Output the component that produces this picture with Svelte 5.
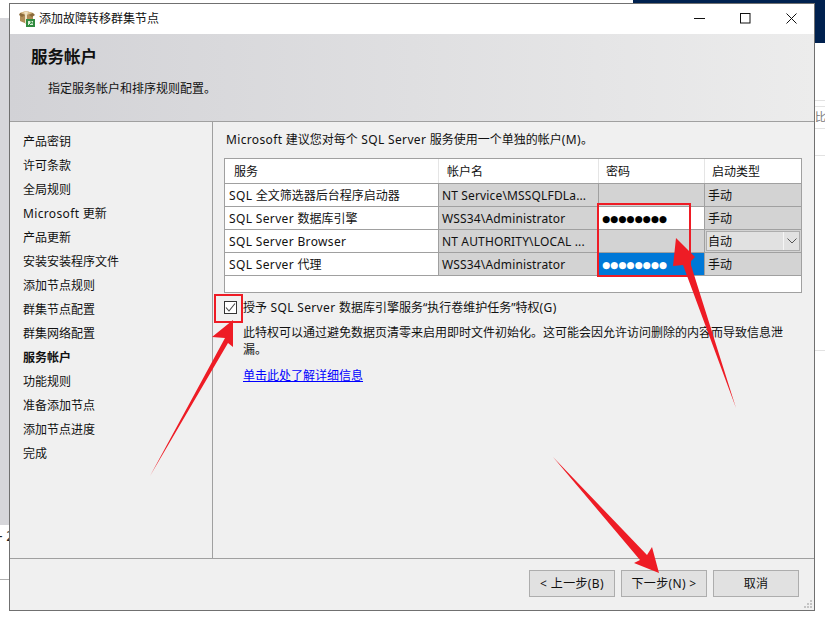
<script>
  const steps = ['产品密钥', '许可条款', '全局规则', 'Microsoft 更新', '产品更新', '安装安装程序文件', '添加节点规则', '群集节点配置', '群集网络配置', '服务帐户', '功能规则', '准备添加节点', '添加节点进度', '完成'];
  const current = '服务帐户';
  const dots = '●●●●●●●●';
  const rows = [
    { service: 'SQL 全文筛选器后台程序启动器', account: 'NT Service\\MSSQLFDLa...', start: '手动' },
    { service: 'SQL Server 数据库引擎', account: 'WSS34\\Administrator', pw: 'edit', start: '手动' },
    { service: 'SQL Server Browser', account: 'NT AUTHORITY\\LOCAL ...', start: '自动', combo: true },
    { service: 'SQL Server 代理', account: 'WSS34\\Administrator', pw: 'selected', start: '手动' }
  ];

  // latin runs get a little tracking, the CJK glyphs stay on their 12px pitch
  const runs = (text) => text.match(/[\x20-\x7e]+|[^\x20-\x7e]+/g);
  const isLatin = (run) => /^[\x20-\x7e]/.test(run);
</script>

{#snippet mixed(text)}
  {#each runs(text) as run}{#if isLatin(run)}<span class="lat">{run}</span>{:else}{run}{/if}{/each}
{/snippet}

<div class="desktop">
  <div class="bg-gray"></div>
  <div class="bg-navy"></div>
  <div class="bg-line" style="top: 100px"></div>
  <div class="bg-line" style="top: 106px"></div>
  <div class="bg-line" style="top: 128px"></div>
  <div class="bg-line" style="top: 155px"></div>
  <div class="bg-line" style="top: 350px"></div>
  <div class="bg-rule"></div>
  <span class="bg-text right-text">比</span>
  <span class="bg-text left-text">- 2</span>

  <div class="window">
    <div class="titlebar">
      <svg class="app-icon" width="16" height="17" viewBox="0 0 16 17">
        <path d="M1 3l6-2 7 2v8l-6 3-7-3z" fill="#b08d57" />
        <path d="M1 3l6 2 7-2-7-2z" fill="#d9bd8a" />
        <path d="M5 1.5l1 4v8h2v-8l1-4z" fill="#efe2c4" />
        <path d="M1 3l-1 2 3 2 3-2zM14 3l2 2-3 2-3-2z" fill="#8a6a3a" />
        <rect x="7" y="9" width="9" height="8" fill="#2f8a3e" />
        <rect x="9" y="11" width="5" height="4" fill="#dcefd8" />
        <path d="M10 15l3-3M11 12h2v2" stroke="#2f8a3e" fill="none" />
      </svg>
      <span class="title">添加故障转移群集节点</span>
      <div class="controls">
        <svg width="11" height="11" viewBox="0 0 11 11"><path d="M0 5.5h11" stroke="#111" /></svg>
        <svg width="11" height="11" viewBox="0 0 11 11"><rect x=".5" y=".5" width="9.5" height="9.5" fill="none" stroke="#111" /></svg>
        <svg width="11" height="11" viewBox="0 0 11 11"><path d="M.5.5l10 10M10.5.5l-10 10" stroke="#111" /></svg>
      </div>
    </div>

    <header class="banner">
      <h1>服务帐户</h1>
      <p>指定服务帐户和排序规则配置。</p>
    </header>

    <div class="body">
      <nav class="steps">
        {#each steps as step}
          <div class="step" class:current={step === current}>{@render mixed(step)}</div>
        {/each}
      </nav>

      <main class="page">
        <p class="intro">{@render mixed('Microsoft 建议您对每个 SQL Server 服务使用一个单独的帐户(M)。')}</p>

        <div class="table">
          <div class="grid">
            <div class="th first">服务</div>
            <div class="th second">帐户名</div>
            <div class="th third">密码</div>
            <div class="th fourth">启动类型</div>
            {#each rows as row}
              <div class="td service">{@render mixed(row.service)}</div>
              <div class="td off account">{row.account}</div>
              {#if row.pw === 'edit'}
                <div class="td pw edit">{dots}</div>
              {:else if row.pw === 'selected'}
                <div class="td pw selected">{dots}</div>
              {:else}
                <div class="td off"></div>
              {/if}
              {#if row.combo}
                <div class="td off combo-cell">
                  <div class="combo">
                    <span class="combo-text">{row.start}</span>
                    <span class="combo-btn">
                      <svg width="10" height="6" viewBox="0 0 10 6"><path d="M.5.5L5 5 9.5.5" fill="none" stroke="#555" /></svg>
                    </span>
                  </div>
                </div>
              {:else}
                <div class="td off">{row.start}</div>
              {/if}
            {/each}
          </div>
          <div class="table-rest"></div>
        </div>

        <div class="grant">
          <span class="checkbox">
            <svg width="11" height="11" viewBox="0 0 11 11"><path d="M1 5.5L4 9l6-7.500" fill="none" stroke="#444" stroke-width="1.100" /></svg>
          </span>
          <span>{@render mixed('授予 SQL Server 数据库引擎服务“执行卷维护任务”特权(G)')}</span>
        </div>
        <p class="note">此特权可以通过避免数据页清零来启用即时文件初始化。这可能会因允许访问删除的内容而导致信息泄漏。</p>
        <a class="more" href="#more">单击此处了解详细信息</a>
      </main>
    </div>

    <footer class="footer">
      <button class="btn"><span class="btn-label">&lt; 上一步(B)</span></button>
      <button class="btn"><span class="btn-label">下一步(N) &gt;</span></button>
      <button class="btn"><span class="btn-label">取消</span></button>
    </footer>
    <svg class="grip" width="9" height="9" viewBox="0 0 9 9" fill="#c4c4c4">
      <rect x="6" y="0" width="2" height="2" /><rect x="3" y="3" width="2" height="2" /><rect x="6" y="3" width="2" height="2" />
      <rect x="0" y="6" width="2" height="2" /><rect x="3" y="6" width="2" height="2" /><rect x="6" y="6" width="2" height="2" />
    </svg>
  </div>

  <div class="mark pw-mark"></div>
  <div class="mark check-mark"></div>
  <svg class="arrows" width="825" height="617" viewBox="0 0 825 617" fill="#ee1c25">
    <polygon points="150,476 225,338 212,337 233,320 233,347 228,343" />
    <polygon points="736,408 683,265 673,266 676,238 695,257 690,262" />
    <polygon points="553,457 640,560 634,563 659,573 652,547 647,555" />
  </svg>
</div>

<style>
  :global(body) {
    margin: 0;
    background: #fff;
  }

  .desktop {
    position: relative;
    width: 825px;
    height: 617px;
    overflow: hidden;
    font-family: "Noto Sans", "Noto Sans CJK SC", sans-serif;
    font-size: 12px;
    color: #111;
  }

  .lat {
    letter-spacing: 0.35px;
  }

  .bg-gray {
    position: absolute;
    left: 0;
    top: 18px;
    width: 9px;
    height: 507px;
    background: #d6d6da;
  }

  .bg-navy {
    position: absolute;
    left: 633px;
    top: 0;
    width: 192px;
    height: 43px;
    background: #00214f;
  }

  .bg-line {
    position: absolute;
    left: 814px;
    width: 11px;
    height: 1px;
    background: #e2e2e2;
  }

  .bg-rule {
    position: absolute;
    left: 0;
    top: 579px;
    width: 9px;
    height: 1px;
    background: #b0b0b0;
  }

  .bg-text {
    position: absolute;
    color: #777;
    line-height: 14px;
  }

  .right-text {
    left: 815px;
    top: 110px;
    font-size: 11px;
  }

  .left-text {
    left: -2px;
    top: 529px;
    color: #222;
    font-size: 14px;
  }

  .window {
    position: absolute;
    left: 9px;
    top: 3px;
    box-sizing: border-box;
    width: 806px;
    height: 608px;
    display: flex;
    flex-direction: column;
    border: 1px solid #707070;
    background: #f0f0f0;
  }

  .titlebar {
    box-sizing: border-box;
    height: 30px;
    flex: none;
    display: flex;
    align-items: center;
    background: #fff;
    padding: 0 0 2px 9px;
  }

  .app-icon {
    margin-right: 4px;
  }

  .controls {
    margin-left: auto;
    display: flex;
    gap: 35px;
    padding-right: 17px;
  }

  .banner {
    box-sizing: border-box;
    height: 88px;
    flex: none;
    padding: 13px 0 0 21px;
    border-bottom: 1px solid #a0a0a0;
    background: linear-gradient(90deg, #d2d2d6, #ececec);
  }

  .banner h1 {
    margin: 0;
    font-size: 16.500px;
    line-height: 20px;
    font-weight: 700;
  }

  .banner p {
    margin: 14px 0 0 17px;
    line-height: 16px;
  }

  .body {
    flex: 1;
    display: flex;
    min-height: 0;
  }

  .steps {
    box-sizing: border-box;
    width: 203px;
    flex: none;
    padding: 8px 0 0 13px;
    border-right: 1px solid #a0a0a0;
  }

  .step {
    height: 24px;
    line-height: 24px;
  }

  .current {
    font-weight: 700;
  }

  .page {
    flex: 1;
    padding: 9px 0 0 11px;
  }

  .intro {
    margin: 0 0 9px 2px;
    line-height: 18px;
  }

  .table {
    box-sizing: border-box;
    width: 578px;
    border: 1px solid #a0a0a0;
    background: #fff;
  }

  .grid {
    display: grid;
    grid-template-columns: 213px 159px 105px 96px;
    grid-template-rows: 24px repeat(4, 22px);
    gap: 1px 1px;
    background: #a0a0a0;
    border-bottom: 1px solid #a0a0a0;
  }

  .th {
    background: #fff;
    line-height: 26px;
  }

  .first { padding-left: 9px; }
  .second { padding-left: 8px; }
  .third { padding-left: 7px; }
  .fourth { padding-left: 7px; }

  .th:not(.fourth) {
    box-shadow: 1px 0 0 #e5e5e5;
  }

  .td {
    padding-left: 3px;
    line-height: 24px;
    white-space: nowrap;
    overflow: hidden;
  }

  .service {
    background: #fff;
    padding-left: 4px;
  }

  .off {
    background: #d3d3d3;
  }

  .account {
    letter-spacing: 0.15px;
  }

  .pw {
    font-family: "DejaVu Sans", sans-serif;
    font-size: 9.300px;
  }

  .edit {
    background: #fff;
    color: #000;
  }

  .selected {
    background: #0078d7;
    color: #fff;
  }

  .combo-cell {
    padding: 0;
    display: flex;
    align-items: stretch;
  }

  .combo {
    flex: 1;
    display: flex;
    margin: 1px;
    border: 1px solid #adadad;
    background: #e1e1e1;
  }

  .combo-text {
    flex: 1;
    padding-left: 1px;
    line-height: 20px;
  }

  .combo-btn {
    width: 15px;
    display: flex;
    align-items: center;
    justify-content: center;
    border-left: 1px solid #f5f5f5;
  }

  .table-rest {
    height: 16px;
  }

  .grant {
    display: flex;
    align-items: center;
    margin-top: 4px;
    height: 20px;
    gap: 6px;
  }

  .checkbox {
    box-sizing: border-box;
    width: 13px;
    height: 13px;
    display: flex;
    align-items: center;
    justify-content: center;
    border: 1px solid #333;
    background: #fff;
  }

  .note {
    width: 548px;
    margin: 7px 0 0 19px;
    line-height: 17px;
  }

  .more {
    display: block;
    margin: 9px 0 0 19px;
    line-height: 17px;
    color: #0000ff;
    text-decoration: underline;
  }

  .footer {
    box-sizing: border-box;
    height: 52px;
    flex: none;
    display: flex;
    justify-content: flex-end;
    gap: 6px;
    padding: 11px 15px 0 0;
    border-top: 1px solid #a0a0a0;
  }

  .btn {
    box-sizing: border-box;
    width: 86px;
    height: 27px;
    padding: 0 0 2px;
    border: 1px solid #adadad;
    background: #e1e1e1;
    color: #111;
    font: inherit;
  }

  .btn-label {
    letter-spacing: 0.35px;
  }

  .grip {
    position: absolute;
    right: 1px;
    bottom: 1px;
  }

  .mark {
    position: absolute;
    box-sizing: border-box;
    border: 2px solid #ee1c25;
  }

  .pw-mark {
    left: 597px;
    top: 203px;
    width: 94px;
    height: 74px;
  }

  .check-mark {
    left: 214px;
    top: 294px;
    width: 29px;
    height: 29px;
  }

  .arrows {
    position: absolute;
    left: 0;
    top: 0;
  }
</style>
